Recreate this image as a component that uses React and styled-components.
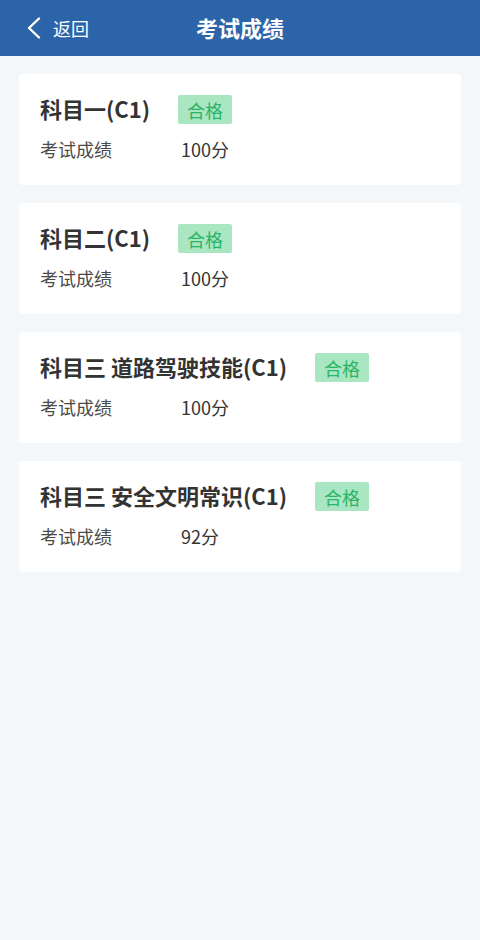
import React from "react";
import styled, { createGlobalStyle } from "styled-components";

const GlobalStyle = createGlobalStyle`
  html, body {
    margin: 0;
    padding: 0;
    background: #f3f7f9;
    font-family: "Noto Sans CJK SC", "Noto Sans", sans-serif;
  }
  * { box-sizing: border-box; }
`;

const Page = styled.div`
  width: 480px;
  min-height: 940px;
  background: #f3f7f9;
`;

const Header = styled.header`
  height: 56px;
  background: #2c64a9;
  display: flex;
  align-items: center;
  position: relative;
  color: #fff;
`;

const Back = styled.div`
  display: flex;
  align-items: center;
  padding-left: 26px;
  gap: 11px;
  font-size: 18px;
  height: 100%;
  svg {
    display: block;
  }
`;

const Title = styled.h1`
  position: absolute;
  left: 0;
  right: 0;
  top: 0;
  margin: 0;
  line-height: 54px;
  text-align: center;
  font-size: 22px;
  font-weight: 700;
  pointer-events: none;
`;

const List = styled.main`
  display: flex;
  flex-direction: column;
  gap: 18px;
  padding: 18px 19px;
`;

const Card = styled.section`
  background: #fff;
  border-radius: 4px;
  padding: 21px 21px 24px;
`;

const CardHead = styled.div`
  display: flex;
  align-items: center;
  height: 29px;
`;

const Subject = styled.span`
  font-size: 22px;
  line-height: 1;
  font-weight: 700;
  color: #333;
  margin-right: 28px;
  position: relative;
  top: -2px;
`;

const Badge = styled.span`
  display: inline-flex;
  align-items: center;
  justify-content: center;
  width: 54px;
  height: 29px;
  border-radius: 2px;
  background: #a9e6c1;
  color: #2bb468;
  font-size: 18px;
`;

const Row = styled.div`
  display: flex;
  align-items: center;
  margin-top: 13px;
  height: 24px;
  font-size: 18px;
  color: #4a4a4a;
`;

const Label = styled.span`
  width: 141px;
`;

const Value = styled.span`
  color: #333;
`;

const results = [
  { name: "科目一(C1)", score: "100分" },
  { name: "科目二(C1)", score: "100分" },
  { name: "科目三 道路驾驶技能(C1)", score: "100分" },
  { name: "科目三 安全文明常识(C1)", score: "92分" },
];

export default function App() {
  return (
    <Page>
      <GlobalStyle />
      <Header>
        <Back>
          <svg width="16" height="22" viewBox="0 0 16 22" fill="none">
            <path
              d="M13 1.5 L3 11 L13 20.5"
              stroke="#fff"
              strokeWidth="2.4"
              strokeLinecap="round"
              strokeLinejoin="round"
            />
          </svg>
          <span>返回</span>
        </Back>
        <Title>考试成绩</Title>
      </Header>
      <List>
        {results.map((r) => (
          <Card key={r.name}>
            <CardHead>
              <Subject>{r.name}</Subject>
              <Badge>合格</Badge>
            </CardHead>
            <Row>
              <Label>考试成绩</Label>
              <Value>{r.score}</Value>
            </Row>
          </Card>
        ))}
      </List>
    </Page>
  );
}
